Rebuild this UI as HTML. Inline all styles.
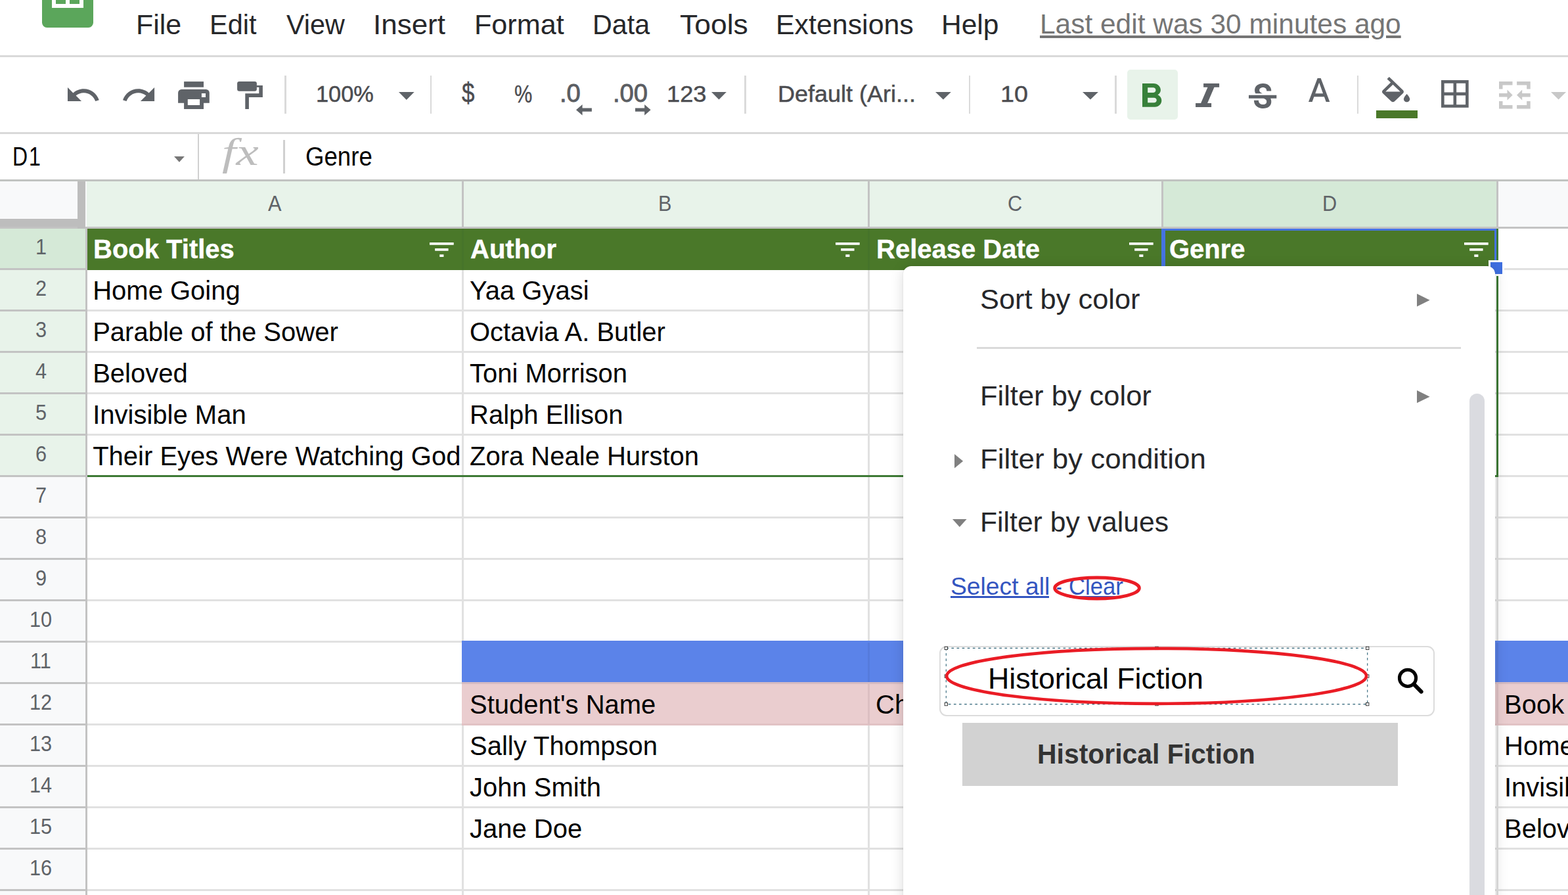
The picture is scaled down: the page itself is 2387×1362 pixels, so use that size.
<!DOCTYPE html>
<html lang="en">
<head>
<meta charset="utf-8">
<title>Filter by values - Sheets</title>
<style>
html,body{margin:0;padding:0;background:#fff;}
body{width:2387px;height:1362px;overflow:hidden;font-family:"Liberation Sans",Arial,sans-serif;}
#app{position:relative;width:2387px;height:1362px;overflow:hidden;background:#fff;}
#app div,#app span,#app a,#app svg,#app nav,#app section,#app header{position:absolute;display:block;box-sizing:border-box;}
.t{white-space:nowrap;line-height:1em;transform-origin:0 0;}
.i{overflow:visible;}

</style>
</head>
<body>
<div id="app">
<section id="grid" style="left:0;top:276px;width:2387px;height:1086px;">
<div style="left:0px;top:0px;width:2387px;height:70px;background:#f8f9fa;"></div>
<div style="left:131.5px;top:0px;width:1638px;height:70px;background:#e8f3ea;"></div>
<div style="left:1769.5px;top:0px;width:510px;height:70px;background:#d5e9d7;"></div>
<div style="left:0px;top:70.65px;width:131.5px;height:1015.35px;background:#f8f9fa;"></div>
<div style="left:0px;top:70.65px;width:131.5px;height:378px;background:#e8f3ea;"></div>
<div style="left:0px;top:70.65px;width:131.5px;height:63px;background:#d5e9d7;"></div>
<div style="left:703px;top:70.65px;width:3px;height:1086px;background:#e1e1e1;"></div>
<div style="left:703px;top:0px;width:3px;height:70px;background:#c3c3c3;"></div>
<div style="left:1320.5px;top:70.65px;width:3px;height:1086px;background:#e1e1e1;"></div>
<div style="left:1320.5px;top:0px;width:3px;height:70px;background:#c3c3c3;"></div>
<div style="left:1768px;top:70.65px;width:3px;height:1086px;background:#e1e1e1;"></div>
<div style="left:1768px;top:0px;width:3px;height:70px;background:#c3c3c3;"></div>
<div style="left:2278px;top:70.65px;width:3px;height:1086px;background:#e1e1e1;"></div>
<div style="left:2278px;top:0px;width:3px;height:70px;background:#c3c3c3;"></div>
<div style="left:131.5px;top:132.15px;width:2255.5px;height:3px;background:#e1e1e1;"></div>
<div style="left:0px;top:132.15px;width:131.5px;height:3px;background:#c3c3c3;"></div>
<div style="left:131.5px;top:195.15px;width:2255.5px;height:3px;background:#e1e1e1;"></div>
<div style="left:0px;top:195.15px;width:131.5px;height:3px;background:#c3c3c3;"></div>
<div style="left:131.5px;top:258.15px;width:2255.5px;height:3px;background:#e1e1e1;"></div>
<div style="left:0px;top:258.15px;width:131.5px;height:3px;background:#c3c3c3;"></div>
<div style="left:131.5px;top:321.15px;width:2255.5px;height:3px;background:#e1e1e1;"></div>
<div style="left:0px;top:321.15px;width:131.5px;height:3px;background:#c3c3c3;"></div>
<div style="left:131.5px;top:384.15px;width:2255.5px;height:3px;background:#e1e1e1;"></div>
<div style="left:0px;top:384.15px;width:131.5px;height:3px;background:#c3c3c3;"></div>
<div style="left:131.5px;top:447.15px;width:2255.5px;height:3px;background:#e1e1e1;"></div>
<div style="left:0px;top:447.15px;width:131.5px;height:3px;background:#c3c3c3;"></div>
<div style="left:131.5px;top:510.15px;width:2255.5px;height:3px;background:#e1e1e1;"></div>
<div style="left:0px;top:510.15px;width:131.5px;height:3px;background:#c3c3c3;"></div>
<div style="left:131.5px;top:573.15px;width:2255.5px;height:3px;background:#e1e1e1;"></div>
<div style="left:0px;top:573.15px;width:131.5px;height:3px;background:#c3c3c3;"></div>
<div style="left:131.5px;top:636.15px;width:2255.5px;height:3px;background:#e1e1e1;"></div>
<div style="left:0px;top:636.15px;width:131.5px;height:3px;background:#c3c3c3;"></div>
<div style="left:131.5px;top:699.15px;width:2255.5px;height:3px;background:#e1e1e1;"></div>
<div style="left:0px;top:699.15px;width:131.5px;height:3px;background:#c3c3c3;"></div>
<div style="left:131.5px;top:762.15px;width:2255.5px;height:3px;background:#e1e1e1;"></div>
<div style="left:0px;top:762.15px;width:131.5px;height:3px;background:#c3c3c3;"></div>
<div style="left:131.5px;top:825.15px;width:2255.5px;height:3px;background:#e1e1e1;"></div>
<div style="left:0px;top:825.15px;width:131.5px;height:3px;background:#c3c3c3;"></div>
<div style="left:131.5px;top:888.15px;width:2255.5px;height:3px;background:#e1e1e1;"></div>
<div style="left:0px;top:888.15px;width:131.5px;height:3px;background:#c3c3c3;"></div>
<div style="left:131.5px;top:951.15px;width:2255.5px;height:3px;background:#e1e1e1;"></div>
<div style="left:0px;top:951.15px;width:131.5px;height:3px;background:#c3c3c3;"></div>
<div style="left:131.5px;top:1014.15px;width:2255.5px;height:3px;background:#e1e1e1;"></div>
<div style="left:0px;top:1014.15px;width:131.5px;height:3px;background:#c3c3c3;"></div>
<div style="left:131.5px;top:1077.15px;width:2255.5px;height:3px;background:#e1e1e1;"></div>
<div style="left:0px;top:1077.15px;width:131.5px;height:3px;background:#c3c3c3;"></div>
<div style="left:133px;top:72.15px;width:2148px;height:62.5px;background:#4a7829;"></div>
<div style="left:703px;top:699.15px;width:1684.5px;height:63px;background:#5b83e9;"></div>
<div style="left:703px;top:762.15px;width:1684.5px;height:66px;background:#eacdcf;"></div>
<div style="left:703px;top:762.15px;width:1684.5px;height:2.5px;background:#d5bbc2;"></div>
<div style="left:703px;top:825.45px;width:1684.5px;height:2.7px;background:#e1c2c4;"></div>
<div style="left:703px;top:72.15px;width:3px;height:62.5px;background:#46742a;"></div>
<div style="left:1320.5px;top:72.15px;width:3px;height:62.5px;background:#46742a;"></div>
<div style="left:1768px;top:72.15px;width:3px;height:62.5px;background:#46742a;"></div>
<div style="left:1320.5px;top:701.65px;width:3px;height:60.5px;background:#567bdc;"></div>
<div style="left:1320.5px;top:764.65px;width:3px;height:62px;background:#dcbfc2;"></div>
<div style="left:1768px;top:701.65px;width:3px;height:60.5px;background:#567bdc;"></div>
<div style="left:1768px;top:764.65px;width:3px;height:62px;background:#dcbfc2;"></div>
<div style="left:2278px;top:701.65px;width:3px;height:60.5px;background:#567bdc;"></div>
<div style="left:2278px;top:764.65px;width:3px;height:62px;background:#dcbfc2;"></div>
<div style="left:0px;top:69px;width:2387px;height:3px;background:#c3c3c3;"></div>
<div style="left:130px;top:69px;width:3px;height:1086px;background:#c3c3c3;"></div>
<div style="left:0px;top:0px;width:118px;height:57px;background:#f8f9fa;"></div>
<div style="left:118px;top:0px;width:12.3px;height:72px;background:#bdbdbd;"></div>
<div style="left:0px;top:57px;width:130.3px;height:12.2px;background:#bdbdbd;"></div>
<div style="left:133px;top:447px;width:2148.2px;height:3px;background:#3d7a35;"></div>
<div style="left:2278px;top:133.65px;width:3.2px;height:316.35px;background:#3d7a35;"></div>
<div style="left:1768px;top:72px;width:512px;height:3px;background:#4573e1;"></div>
<div style="left:1768px;top:72px;width:6px;height:63px;background:#4573e1;"></div>
<div style="left:2275px;top:72px;width:3.2px;height:63px;background:#4573e1;"></div>
<div style="left:2278px;top:72px;width:3.2px;height:63px;background:#3d7a35;"></div>
<div style="left:2266px;top:120.2px;width:23.8px;height:23.8px;background:#fff;"></div>
<div style="left:2269px;top:123.1px;width:17.8px;height:17.9px;background:#3f6fe0;"></div>
<span class="t" style="left:407.50px;top:17px;font-size:33px;color:#5f6368;transform:scaleX(0.9300);">A</span>
<span class="t" style="left:1002.29px;top:17px;font-size:33px;color:#5f6368;transform:scaleX(0.9300);">B</span>
<span class="t" style="left:1534.17px;top:17px;font-size:33px;color:#5f6368;transform:scaleX(0.9300);">C</span>
<span class="t" style="left:2012.61px;top:17px;font-size:33px;color:#5f6368;transform:scaleX(0.9300);">D</span>
<span class="t" style="left:53.82px;top:83px;font-size:33px;color:#5f6368;transform:scaleX(0.9300);">1</span>
<span class="t" style="left:54.28px;top:146px;font-size:33px;color:#5f6368;transform:scaleX(0.9300);">2</span>
<span class="t" style="left:54.28px;top:209px;font-size:33px;color:#5f6368;transform:scaleX(0.9300);">3</span>
<span class="t" style="left:54.44px;top:272px;font-size:33px;color:#5f6368;transform:scaleX(0.9300);">4</span>
<span class="t" style="left:54.28px;top:335px;font-size:33px;color:#5f6368;transform:scaleX(0.9300);">5</span>
<span class="t" style="left:54.13px;top:398px;font-size:33px;color:#5f6368;transform:scaleX(0.9300);">6</span>
<span class="t" style="left:54.28px;top:461px;font-size:33px;color:#5f6368;transform:scaleX(0.9300);">7</span>
<span class="t" style="left:54.21px;top:524px;font-size:33px;color:#5f6368;transform:scaleX(0.9300);">8</span>
<span class="t" style="left:54.28px;top:587px;font-size:33px;color:#5f6368;transform:scaleX(0.9300);">9</span>
<span class="t" style="left:45.15px;top:650px;font-size:33px;color:#5f6368;transform:scaleX(0.9300);">10</span>
<span class="t" style="left:46.46px;top:713px;font-size:33px;color:#5f6368;transform:scaleX(0.9300);">11</span>
<span class="t" style="left:45.38px;top:776px;font-size:33px;color:#5f6368;transform:scaleX(0.9300);">12</span>
<span class="t" style="left:45.23px;top:839px;font-size:33px;color:#5f6368;transform:scaleX(0.9300);">13</span>
<span class="t" style="left:45.08px;top:902px;font-size:33px;color:#5f6368;transform:scaleX(0.9300);">14</span>
<span class="t" style="left:45.23px;top:965px;font-size:33px;color:#5f6368;transform:scaleX(0.9300);">15</span>
<span class="t" style="left:45.23px;top:1028px;font-size:33px;color:#5f6368;transform:scaleX(0.9300);">16</span>
<span class="t" style="left:141.80px;top:83px;font-size:41px;color:#fff;font-weight:700;transform:scaleX(0.9756);-webkit-text-stroke:0.4px #fff;">Book Titles</span>
<svg class="i" style="left:654.3px;top:92.5px;" width="36.7" height="21.9" viewBox="3.000 6.000 18.000 12.000" preserveAspectRatio="none"><path fill="#fff" d="M3 6h18v2H3zM7 11h10v2H7zM10.500 16h3v2h-3z"/></svg>
<span class="t" style="left:715.60px;top:83px;font-size:41px;color:#fff;font-weight:700;transform:scaleX(0.9756);-webkit-text-stroke:0.4px #fff;">Author</span>
<svg class="i" style="left:1271.8px;top:92.5px;" width="36.7" height="21.9" viewBox="3.000 6.000 18.000 12.000" preserveAspectRatio="none"><path fill="#fff" d="M3 6h18v2H3zM7 11h10v2H7zM10.500 16h3v2h-3z"/></svg>
<span class="t" style="left:1333.60px;top:83px;font-size:41px;color:#fff;font-weight:700;transform:scaleX(0.9756);-webkit-text-stroke:0.4px #fff;">Release Date</span>
<svg class="i" style="left:1719.3px;top:92.5px;" width="36.7" height="21.9" viewBox="3.000 6.000 18.000 12.000" preserveAspectRatio="none"><path fill="#fff" d="M3 6h18v2H3zM7 11h10v2H7zM10.500 16h3v2h-3z"/></svg>
<span class="t" style="left:1780.40px;top:83px;font-size:41px;color:#fff;font-weight:700;transform:scaleX(0.9756);-webkit-text-stroke:0.4px #fff;">Genre</span>
<svg class="i" style="left:2229.3px;top:92.5px;" width="36.7" height="21.9" viewBox="3.000 6.000 18.000 12.000" preserveAspectRatio="none"><path fill="#fff" d="M3 6h18v2H3zM7 11h10v2H7zM10.500 16h3v2h-3z"/></svg>
<span class="t" style="left:141.20px;top:146px;font-size:40px;color:#000;">Home Going</span>
<span class="t" style="left:715.00px;top:146px;font-size:40px;color:#000;">Yaa Gyasi</span>
<span class="t" style="left:141.20px;top:209px;font-size:40px;color:#000;">Parable of the Sower</span>
<span class="t" style="left:715.00px;top:209px;font-size:40px;color:#000;">Octavia A. Butler</span>
<span class="t" style="left:141.20px;top:272px;font-size:40px;color:#000;">Beloved</span>
<span class="t" style="left:715.00px;top:272px;font-size:40px;color:#000;">Toni Morrison</span>
<span class="t" style="left:141.20px;top:335px;font-size:40px;color:#000;">Invisible Man</span>
<span class="t" style="left:715.00px;top:335px;font-size:40px;color:#000;">Ralph Ellison</span>
<span class="t" style="left:141.20px;top:398px;font-size:40px;color:#000;">Their Eyes Were Watching God</span>
<span class="t" style="left:715.00px;top:398px;font-size:40px;color:#000;">Zora Neale Hurston</span>
<span class="t" style="left:715.00px;top:776px;font-size:40px;color:#000;">Student's Name</span>
<span class="t" style="left:715.00px;top:839px;font-size:40px;color:#000;">Sally Thompson</span>
<span class="t" style="left:715.00px;top:902px;font-size:40px;color:#000;">John Smith</span>
<span class="t" style="left:715.00px;top:965px;font-size:40px;color:#000;">Jane Doe</span>
<span class="t" style="left:1333.00px;top:776px;font-size:40px;color:#000;">Ch</span>
<span class="t" style="left:2290.00px;top:776px;font-size:40px;color:#000;">Book Title</span>
<span class="t" style="left:2290.00px;top:839px;font-size:40px;color:#000;">Home Going</span>
<span class="t" style="left:2290.00px;top:902px;font-size:40px;color:#000;">Invisible Man</span>
<span class="t" style="left:2290.00px;top:965px;font-size:40px;color:#000;">Beloved</span>
</section>
<header id="menubar" style="left:0;top:0;width:2387px;height:87px;background:#fff;">
<div style="left:64.2px;top:-40px;width:77.9px;height:82px;background:#5ba65b;border-radius:7.500px;"></div>
<div style="left:78.9px;top:-20px;width:48.5px;height:32px;background:#fff;"></div>
<div style="left:85px;top:-20px;width:14.7px;height:25.5px;background:#5ba65b;"></div>
<div style="left:106px;top:-20px;width:15px;height:25.5px;background:#5ba65b;"></div>
<nav style="left:0;top:0;width:1560px;height:84px;">
<span class="t" style="left:207.37px;top:16px;font-size:43px;color:#26272a;transform:scaleX(0.9976);">File</span>
<span class="t" style="left:318.68px;top:16px;font-size:43px;color:#26272a;transform:scaleX(0.9644);">Edit</span>
<span class="t" style="left:435.59px;top:16px;font-size:43px;color:#26272a;transform:scaleX(0.9606);">View</span>
<span class="t" style="left:568.14px;top:16px;font-size:43px;color:#26272a;transform:scaleX(1.0221);">Insert</span>
<span class="t" style="left:721.75px;top:16px;font-size:43px;color:#26272a;transform:scaleX(1.0035);">Format</span>
<span class="t" style="left:901.60px;top:16px;font-size:43px;color:#26272a;transform:scaleX(0.9589);">Data</span>
<span class="t" style="left:1034.81px;top:16px;font-size:43px;color:#26272a;transform:scaleX(1.0333);">Tools</span>
<span class="t" style="left:1180.97px;top:16px;font-size:43px;color:#26272a;transform:scaleX(0.9974);">Extensions</span>
<span class="t" style="left:1433.20px;top:16px;font-size:43px;color:#26272a;transform:scaleX(0.9879);">Help</span>
</nav>
<a class="t" style="left:1583.40px;top:15px;font-size:43px;color:#757575;transform:scaleX(0.9870);text-decoration:underline;text-decoration-thickness:4px;text-underline-offset:3px;text-decoration-skip-ink:auto;">Last edit was 30 minutes ago</a>
<div style="left:0px;top:84.2px;width:2387px;height:3px;background:#d9d9d9;"></div>
</header>
<div id="toolbar" style="left:0;top:87px;width:2387px;height:114px;background:#fff;">
<svg class="i" style="left:103.1px;top:46.2px;" width="47.8" height="21.1" viewBox="2.000 7.000 20.470 9.000" preserveAspectRatio="none"><path fill="#5f6368" d="M12.5 8c-2.65 0-5.05.99-6.9 2.6L2 7v9h9l-3.62-3.62c1.39-1.16 3.16-1.88 5.12-1.88 3.54 0 6.55 2.31 7.6 5.5l2.37-.78C21.08 11.03 17.15 8 12.5 8z"/></svg>
<svg class="i" style="left:187.3px;top:46.2px;" width="48.1" height="21.1" viewBox="1.540 7.000 20.460 9.000" preserveAspectRatio="none"><path fill="#5f6368" d="M18.4 10.6C16.55 8.99 14.15 8 11.5 8c-4.65 0-8.58 3.03-9.96 7.22L3.9 16c1.05-3.19 4.05-5.5 7.6-5.5 1.95 0 3.73.72 5.12 1.88L13 16h9V7l-3.6 3.6z"/></svg>
<svg class="i" style="left:271px;top:37px;" width="48" height="42" viewBox="0 0 48 42"><rect x="9.1" y="0.1" width="29.9" height="8.6" fill="#5f6368"/><path fill="#5f6368" fill-rule="evenodd" d="M0.1 17.2a5.2 5.200 0 0 1 5.2-5.2h37.300a5.2 5.200 0 0 1 5.2 5.2v15.500h-8.800v9.200h-29.900v-9.200h-9zM14.800 27.100h18.300v9h-18.300zM35.900 17.900h6.100v6h-6.100z"/></svg>
<svg class="i" style="left:361px;top:37px;" width="40" height="42" viewBox="0 0 40 42"><rect x="0.1" y="0.1" width="29.800" height="14.700" rx="3.2" fill="#5f6368"/><path fill="#5f6368" d="M29.500 6.100h9.400v17.800h-21v18h-5.600v-23.700h21v-9.400h-3.800z"/></svg>
<div style="left:433.2px;top:27.6px;width:2.6px;height:58.8px;background:#dadada;"></div>
<div style="left:654.9px;top:27.6px;width:2.6px;height:58.8px;background:#dadada;"></div>
<div style="left:1133.1px;top:27.6px;width:2.6px;height:58.8px;background:#dadada;"></div>
<div style="left:1474.9px;top:27.6px;width:2.6px;height:58.8px;background:#dadada;"></div>
<div style="left:1697.2px;top:27.6px;width:2.6px;height:58.8px;background:#dadada;"></div>
<div style="left:2065.9px;top:27.6px;width:2.6px;height:58.8px;background:#dadada;"></div>
<span class="t" style="left:480.92px;top:39px;font-size:35.5px;color:#4b4c50;transform:scaleX(0.9681);-webkit-text-stroke:0.5px #4b4c50;">100%</span>
<svg class="i" style="left:607.4px;top:53.2px;" width="23.6" height="12.1" viewBox="0.000 0.000 10.000 5.000" preserveAspectRatio="none"><path fill="#5f6368" d="M0 0h10L5 5z"/></svg>
<span class="t" style="left:702.65px;top:34px;font-size:42.5px;color:#4b4c50;transform:scaleX(0.8213);-webkit-text-stroke:0.5px #4b4c50;">$</span>
<span class="t" style="left:782.72px;top:38px;font-size:37.5px;color:#4b4c50;transform:scaleX(0.8195);-webkit-text-stroke:0.4px #4b4c50;">%</span>
<span class="t" style="left:852.46px;top:36px;font-size:38.5px;color:#5a5d62;transform:scaleX(0.9914);-webkit-text-stroke:0.9px #5a5d62;">.0</span>
<svg class="i" style="left:877.4px;top:72px;" width="23.9" height="16.4" viewBox="0.000 0.000 10.000 8.000" preserveAspectRatio="none"><path fill="#5f6368" d="M0 4l4-4v2.700h6v2.600H4V8z"/></svg>
<span class="t" style="left:933.46px;top:36px;font-size:38.5px;color:#5a5d62;transform:scaleX(0.9917);-webkit-text-stroke:0.9px #5a5d62;">.00</span>
<svg class="i" style="left:967.2px;top:72px;" width="23.6" height="16.4" viewBox="0.000 0.000 10.000 8.000" preserveAspectRatio="none"><path fill="#5f6368" d="M10 4L6 0v2.700H0v2.600h6V8z"/></svg>
<span class="t" style="left:1015.49px;top:39px;font-size:35.5px;color:#4b4c50;transform:scaleX(1.0195);-webkit-text-stroke:0.5px #4b4c50;">123</span>
<svg class="i" style="left:1082.8px;top:53.2px;" width="22.9" height="11.6" viewBox="0.000 0.000 10.000 5.000" preserveAspectRatio="none"><path fill="#5f6368" d="M0 0h10L5 5z"/></svg>
<span class="t" style="left:1184.32px;top:39px;font-size:35.5px;color:#4b4c50;transform:scaleX(1.0143);-webkit-text-stroke:0.5px #4b4c50;">Default (Ari...</span>
<svg class="i" style="left:1424px;top:53.2px;" width="23.8" height="11.6" viewBox="0.000 0.000 10.000 5.000" preserveAspectRatio="none"><path fill="#5f6368" d="M0 0h10L5 5z"/></svg>
<span class="t" style="left:1522.97px;top:39px;font-size:35.5px;color:#4b4c50;transform:scaleX(1.0620);-webkit-text-stroke:0.5px #4b4c50;">10</span>
<svg class="i" style="left:1648.4px;top:53.2px;" width="23.9" height="11.6" viewBox="0.000 0.000 10.000 5.000" preserveAspectRatio="none"><path fill="#5f6368" d="M0 0h10L5 5z"/></svg>
<div style="left:1715.8px;top:18.6px;width:77.2px;height:76.4px;background:#e8f3ea;border-radius:5px;"></div>
<svg class="i" style="left:1738.9px;top:40.2px;" width="29.3" height="35.7" viewBox="7.000 4.000 10.750 14.000" preserveAspectRatio="none"><path fill="#37803a" d="M15.6 10.79c.97-.67 1.65-1.77 1.65-2.79 0-2.26-1.75-4-4-4H7v14h7.04c2.09 0 3.71-1.7 3.71-3.79 0-1.52-.86-2.82-2.15-3.42zM10 6.5h3c.83 0 1.5.67 1.5 1.5s-.67 1.5-1.5 1.5h-3v-3zm3.5 9H10v-3h3.5c.83 0 1.5.67 1.5 1.5s-.67 1.5-1.5 1.5z"/></svg>
<svg class="i" style="left:1820px;top:40px;" width="37" height="36" viewBox="0 0 37 36"><path fill="#5f6368" d="M12.100 0h24v5.700h-7.600l-10.400 24.400h6v5.800h-24v-5.800h8l10.400-24.400h-6.400z"/></svg>
<svg class="i" style="left:1900.9px;top:39.8px;" width="42.3" height="38" viewBox="3.000 3.000 18.000 15.010" preserveAspectRatio="none"><path fill="#5f6368" d="M7.24 8.75c-.26-.48-.39-1.03-.39-1.67 0-.61.13-1.16.4-1.67.26-.5.63-.93 1.11-1.29.48-.35 1.05-.63 1.7-.83.66-.19 1.39-.29 2.18-.29.81 0 1.54.11 2.21.34.66.22 1.23.54 1.69.94.47.4.83.88 1.08 1.43.25.55.38 1.15.38 1.81h-3.01c0-.31-.05-.59-.15-.85-.09-.27-.24-.49-.44-.68-.2-.19-.45-.33-.75-.44-.3-.1-.66-.16-1.06-.16-.39 0-.74.04-1.03.13-.29.09-.53.21-.72.36-.19.16-.34.34-.44.55-.1.21-.15.43-.15.66 0 .48.25.88.74 1.21.38.25.77.48 1.41.7H7.39c-.05-.08-.11-.17-.15-.25zM21 12v-2H3v2h9.62c.18.07.4.14.55.2.37.17.66.34.87.51.21.17.35.36.43.57.07.2.11.43.11.69 0 .23-.05.45-.14.66-.09.2-.23.38-.42.53-.19.15-.42.26-.71.35-.29.08-.63.13-1.01.13-.43 0-.83-.04-1.18-.13s-.66-.23-.91-.42c-.25-.19-.45-.44-.59-.75-.14-.31-.25-.76-.25-1.21H6.4c0 .55.08 1.13.24 1.58.16.45.37.85.65 1.21.28.35.6.66.98.92.37.26.78.48 1.22.65.44.17.9.3 1.38.39.48.08.96.13 1.44.13.8 0 1.53-.09 2.18-.28s1.21-.45 1.67-.79c.46-.34.82-.77 1.07-1.27s.38-1.07.38-1.71c0-.6-.1-1.14-.31-1.61-.05-.11-.11-.23-.17-.33H21z"/></svg>
<svg class="i" style="left:1992.1px;top:31.9px;" width="32.3" height="36" viewBox="5.500 3.000 12.990 14.000" preserveAspectRatio="none"><path fill="#5f6368" d="M11 3L5.5 17h2.25l1.12-3h6.25l1.12 3h2.25L13 3h-2zm-1.38 9L12 5.67 14.38 12H9.62z"/></svg>
<svg class="i" style="left:2103.8px;top:29.6px;" width="42.3" height="38.3" viewBox="2.997 0.000 18.003 17.000" preserveAspectRatio="none"><path fill="#5f6368" d="M16.56 8.94L7.62 0 6.21 1.41l2.38 2.38-5.15 5.15c-.59.59-.59 1.54 0 2.12l5.5 5.5c.29.29.68.44 1.06.44s.77-.15 1.06-.44l5.5-5.5c.59-.58.59-1.53 0-2.12zM5.21 10L10 5.21 14.79 10H5.21zM19 11.5s-2 2.17-2 3.5c0 1.1.9 2 2 2s2-.9 2-2c0-1.33-2-3.5-2-3.5z"/></svg>
<div style="left:2095.2px;top:80.8px;width:62.7px;height:11.8px;background:#4a7829;"></div>
<svg class="i" style="left:2194.2px;top:35px;" width="41.7" height="41.8" viewBox="3.000 3.000 18.000 18.000" preserveAspectRatio="none"><path fill="#5f6368" d="M3 3v18h18V3H3zm8 16H5v-6h6v6zm0-8H5V5h6v6zm8 8h-6v-6h6v6zm0-8h-6V5h6v6z"/></svg>
<svg class="i" style="left:2282.2px;top:37.2px;" width="48" height="42" viewBox="0 0 48 42"><path fill="#c8c8c8" d="M0 0h20.500v5.500h-15v6.100h-5.500zM27.100 0h20.600v11.600h-5.500v-6.100h-15.100zM0 41.600v-11.600h5.500v6.100h15v5.500zM47.700 41.600h-20.600v-5.500h15.100v-6.100h5.500zM0 18.100h12.500v-5.500l8.200 8.200-8.200 7.800v-5h-12.500zM47.700 18.100h-12.500v-5.500l-8.200 8.200 8.200 7.800v-5h12.500z"/></svg>
<svg class="i" style="left:2360.5px;top:53.2px;" width="23.1" height="11.5" viewBox="0.000 0.000 10.000 5.000" preserveAspectRatio="none"><path fill="#c8c8c8" d="M0 0h10L5 5z"/></svg>
</div>
<div id="formulabar" style="left:0;top:201px;width:2387px;height:75px;background:#fff;">
<div style="left:0px;top:0px;width:2387px;height:3px;background:#d9d9d9;"></div>
<span class="t" style="left:19.35px;top:17px;font-size:40px;color:#000;transform:scaleX(0.7978);letter-spacing:2.6px;">D1</span>
<svg class="i" style="left:264.5px;top:36.5px;" width="15.9" height="8.8" viewBox="0.000 0.000 10.000 5.000" preserveAspectRatio="none"><path fill="#777" d="M0 0h10L5 5z"/></svg>
<div style="left:300.7px;top:3px;width:2.6px;height:69px;background:#d0d0d0;"></div>
<span class="t" style="left:337.93px;top:0px;font-size:60px;color:#bdbdbd;font-style:italic;font-family:'Liberation Serif', serif;transform:scaleX(1.2837);">fx</span>
<div style="left:431.3px;top:12.2px;width:2.6px;height:50.7px;background:#d0d0d0;"></div>
<span class="t" style="left:464.87px;top:17px;font-size:40px;color:#000;transform:scaleX(0.9153);">Genre</span>
<div style="left:0px;top:72px;width:2387px;height:3px;background:#c1c3c1;"></div>
</div>
<div id="filter-menu" style="left:1375px;top:405px;width:901px;height:987px;background:#fff;border-radius:12px 12px 0 0;box-shadow:0 3px 20px rgba(0,0,0,.15),0 0 2px rgba(0,0,0,.10);">
<span class="t" style="left:116.65px;top:29px;font-size:43px;color:#26272a;transform:scaleX(1.0086);">Sort by color</span>
<svg class="i" style="left:781.5px;top:41.6px;" width="19.6" height="19.4" viewBox="0.000 0.000 5.000 10.000" preserveAspectRatio="none"><path fill="#808080" d="M0 0l5 5-5 5z"/></svg>
<div style="left:111.6px;top:123.3px;width:737.3px;height:2.6px;background:#dadada;"></div>
<span class="t" style="left:116.92px;top:176px;font-size:43px;color:#26272a;transform:scaleX(1.0106);">Filter by color</span>
<svg class="i" style="left:781.5px;top:188.7px;" width="19.6" height="19.3" viewBox="0.000 0.000 5.000 10.000" preserveAspectRatio="none"><path fill="#808080" d="M0 0l5 5-5 5z"/></svg>
<svg class="i" style="left:77.6px;top:286px;" width="13.1" height="21.4" viewBox="0.000 0.000 5.000 10.000" preserveAspectRatio="none"><path fill="#808080" d="M0 0l5 5-5 5z"/></svg>
<span class="t" style="left:116.89px;top:272px;font-size:43px;color:#26272a;transform:scaleX(1.0204);">Filter by condition</span>
<svg class="i" style="left:74.9px;top:385px;" width="21.6" height="12.1" viewBox="0.000 0.000 10.000 5.000" preserveAspectRatio="none"><path fill="#808080" d="M0 0h10L5 5z"/></svg>
<span class="t" style="left:116.99px;top:368px;font-size:43px;color:#26272a;transform:scaleX(0.9925);">Filter by values</span>
<a class="t" style="left:71.82px;top:470px;font-size:36.5px;color:#3355c0;transform:scaleX(1.0209);">Select all</a>
<div style="left:72.2px;top:502px;width:150.1px;height:2.8px;background:#3355c0;"></div>
<span class="t" style="left:233.34px;top:470px;font-size:36.5px;color:#3355c0;transform:scaleX(0.7045);">-</span>
<a class="t" style="left:252.27px;top:470px;font-size:36.5px;color:#3355c0;transform:scaleX(0.9506);">Clear</a>
<div style="left:253.3px;top:502px;width:81.7px;height:2.8px;background:#3355c0;"></div>
<div style="left:55.2px;top:578.4px;width:754.1px;height:106.7px;background:#fff;border:2.6px solid #dcdcdc;border-radius:11px;"></div>
<span class="t" style="left:128.52px;top:607px;font-size:43.5px;color:#000;transform:scaleX(1.0279);">Historical Fiction</span>
<svg class="i" style="left:745px;top:605px;" width="54" height="54" viewBox="0 0 54 54"><circle cx="23" cy="21.8" r="12.6" fill="none" stroke="#000" stroke-width="5"/><path d="M32.300 31.200L43.600 42.600" stroke="#000" stroke-width="6" stroke-linecap="round" fill="none"/></svg>
<div style="left:90.2px;top:695px;width:662.5px;height:95.6px;background:#d2d2d2;"></div>
<span class="t" style="left:204.24px;top:722px;font-size:42.5px;color:#333;font-weight:700;transform:scaleX(0.9624);">Historical Fiction</span>
<div style="left:861.5px;top:194.2px;width:23.2px;height:900px;background:#dadbe0;border-radius:11.6px;"></div>
<svg class="i" style="left:215px;top:460px;" width="160" height="60" viewBox="0 0 160 60"><ellipse cx="80" cy="30" rx="64.4" ry="16" fill="none" stroke="#ea1c25" stroke-width="4.8"/></svg>
<svg class="i" style="left:55px;top:571px;" width="662" height="106" viewBox="0 0 662 106"><rect x="10.3" y="10.4" width="641.4" height="85.2" fill="none" stroke="#2f6478" stroke-width="1.1" stroke-dasharray="3.7 4.4"/><rect x="8.1" y="8.2" width="4.4" height="4.4" fill="#fff" stroke="#2a2a2a" stroke-width="0.9"/><rect x="8.1" y="50.8" width="4.4" height="4.4" fill="#fff" stroke="#2a2a2a" stroke-width="0.9"/><rect x="8.1" y="93.4" width="4.4" height="4.4" fill="#fff" stroke="#2a2a2a" stroke-width="0.9"/><rect x="328.8" y="8.2" width="4.4" height="4.4" fill="#fff" stroke="#2a2a2a" stroke-width="0.9"/><rect x="328.8" y="93.4" width="4.4" height="4.4" fill="#fff" stroke="#2a2a2a" stroke-width="0.9"/><rect x="649.5" y="8.2" width="4.4" height="4.4" fill="#fff" stroke="#2a2a2a" stroke-width="0.9"/><rect x="649.5" y="50.8" width="4.4" height="4.4" fill="#fff" stroke="#2a2a2a" stroke-width="0.9"/><rect x="649.5" y="93.4" width="4.4" height="4.4" fill="#fff" stroke="#2a2a2a" stroke-width="0.9"/><ellipse cx="330.6" cy="52.8" rx="319.5" ry="42" fill="none" stroke="#ea1c25" stroke-width="4.7"/></svg>
</div>
</div>
</body>
</html>
